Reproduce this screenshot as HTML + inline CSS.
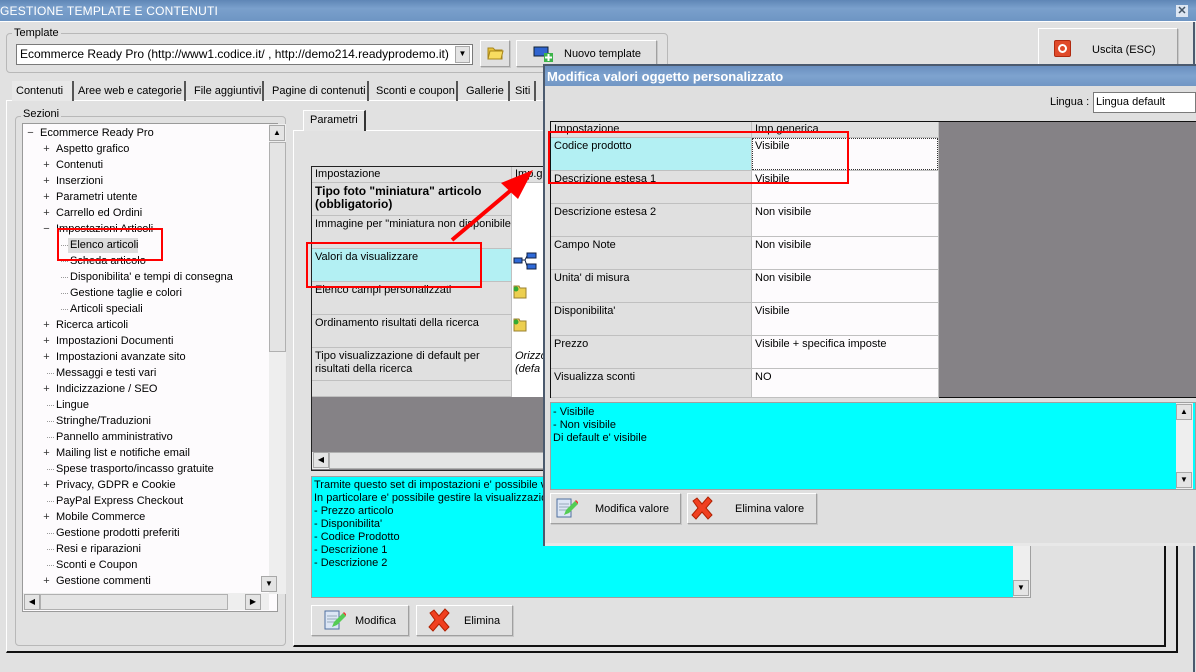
<!DOCTYPE html>
<html><head><meta charset="utf-8"><style>
*{margin:0;padding:0;box-sizing:border-box}
body{width:1196px;height:672px;overflow:hidden;background:#e1e1e1;font:11px "Liberation Sans",sans-serif;color:#000;position:relative}
.a{position:absolute}
.t{position:absolute;white-space:nowrap;line-height:13px}
.btn{position:absolute;background:#e0e0e0;border:1px solid #fff;border-right-color:#a0a0a0;border-bottom-color:#a0a0a0;box-shadow:1px 1px 0 #c8c8c8}
.grp{position:absolute;border:1px solid #b8b8b8;border-radius:4px}
.lbl{position:absolute;background:#e1e1e1;padding:0 2px;line-height:12px}
.tab{position:absolute;top:81px;height:20px;border-right:2px solid #555;line-height:20px;padding-left:4px;white-space:nowrap}
.cell{position:absolute;border-right:1px solid #c0c0c0;border-bottom:1px solid #c0c0c0;padding:2px 3px;line-height:13px}
.sb{position:absolute;background:#eeeeee}
.arr{position:absolute;width:16px;height:16px;background:#e4e4e4;border:1px solid #a8a8a8;font-size:8px;text-align:center;line-height:14px}
</style></head><body>
<div class="a" style="left:0;top:0;width:1196px;height:22px;background:linear-gradient(#5f86b6,#7aa0cc 40%,#6e95c3);border-bottom:1px solid #fff"></div>
<div class="t" style="left:0;top:5px;color:#fff;font-size:12px;letter-spacing:0.2px">GESTIONE TEMPLATE E CONTENUTI</div>
<div class="a" style="left:1176px;top:5px;width:12px;height:12px;background:#dde6f2;color:#456;font-size:11px;font-weight:bold;line-height:12px;text-align:center">✕</div>
<div class="a" style="left:1193px;top:22px;width:2px;height:650px;background:#4b5a6e"></div>

<div class="grp" style="left:6px;top:33px;width:662px;height:40px"></div>
<div class="lbl" style="left:12px;top:27px">Template</div>
<div class="a" style="left:16px;top:44px;width:457px;height:21px;background:#fff;border:1px solid #7a7a7a"></div>
<div class="t" style="left:20px;top:48px;font-size:12px">Ecommerce Ready Pro (http://www1.codice.it/ , http://demo214.readyprodemo.it)</div>
<div class="arr" style="left:455px;top:46px;width:15px;height:17px">▼</div>
<div class="btn" style="left:480px;top:40px;width:30px;height:27px"></div>
<svg class="a" style="left:486px;top:43px" width="18" height="18"><path d="M2 5h5l2 2h7v9H2z" fill="#e8c23a" stroke="#a8861a"/><path d="M4 8h13l-2 8H2z" fill="#f8dc60" stroke="#a8861a"/></svg>
<div class="btn" style="left:516px;top:40px;width:141px;height:27px"></div>
<svg class="a" style="left:533px;top:44px" width="22" height="18"><rect x="1" y="3" width="14" height="9" fill="#2f64d0" stroke="#123"/><rect x="11" y="9" width="9" height="9" fill="#3cb34a"/><path d="M15.5 10v7M12 13.5h7" stroke="#fff" stroke-width="2"/></svg>
<div class="t" style="left:564px;top:48px">Nuovo template</div>

<div class="btn" style="left:1038px;top:28px;width:140px;height:40px"></div>
<div class="a" style="left:1054px;top:40px;width:17px;height:17px;background:#e04a2a;border:1px solid #b02a10;border-radius:2px"></div>
<div class="a" style="left:1058px;top:44px;width:9px;height:9px;border:2px solid #fff;border-radius:50%"></div>
<div class="t" style="left:1092px;top:44px">Uscita (ESC)</div>

<div class="a" style="left:6px;top:100px;width:1172px;height:553px;border-right:2px solid #111;border-bottom:2px solid #111;border-left:1px solid #fff;border-top:1px solid #fff"></div>
<div class="tab" style="left:12px;width:62px;background:#e8e8e8">Contenuti</div>
<div class="tab" style="left:74px;width:112px">Aree web e categorie</div>
<div class="tab" style="left:190px;width:74px">File aggiuntivi</div>
<div class="tab" style="left:268px;width:101px">Pagine di contenuti</div>
<div class="tab" style="left:372px;width:86px">Sconti e coupon</div>
<div class="tab" style="left:462px;width:48px">Gallerie</div>
<div class="tab" style="left:511px;width:25px">Siti</div>

<div class="grp" style="left:15px;top:116px;width:271px;height:530px"></div>
<div class="lbl" style="left:21px;top:108px">Sezioni</div>
<div class="a" style="left:22px;top:123px;width:256px;height:489px;background:#fdfbfd;border:1px solid #9a9a9a"></div>
<div class="sb" style="left:269px;top:124px;width:17px;height:470px"></div>
<div class="arr" style="left:269px;top:125px">▲</div>
<div class="a" style="left:269px;top:142px;width:17px;height:210px;background:#e4e4e4;border:1px solid #b0b0b0"></div>
<div class="arr" style="left:261px;top:576px">▼</div>
<div class="sb" style="left:23px;top:593px;width:246px;height:17px"></div>
<div class="arr" style="left:24px;top:594px">◀</div>
<div class="a" style="left:40px;top:594px;width:188px;height:16px;background:#e4e4e4;border:1px solid #b0b0b0"></div>
<div class="arr" style="left:245px;top:594px">▶</div>
<div id="tree"></div>

<div class="a" style="left:293px;top:130px;width:873px;height:517px;border-left:1px solid #fff;border-top:1px solid #fff;border-right:2px solid #111;border-bottom:2px solid #111"></div>
<div class="a" style="left:303px;top:110px;width:63px;height:21px;border-top:1px solid #fff;border-left:1px solid #fff;border-right:2px solid #333;background:#e4e4e4"></div>
<div class="t" style="left:310px;top:114px">Parametri</div>
<div class="a" style="left:311px;top:166px;width:234px;height:305px;border:1px solid #222;background:#858286"></div>
<div class="a" style="left:312px;top:167px;width:233px;height:230px;background:#fff"></div>
<div class="cell" style="left:312px;top:167px;width:200px;height:16px;background:#e0e0e0;padding-top:1px">Impostazione</div>
<div class="cell" style="left:512px;top:167px;width:33px;height:16px;background:#e0e0e0;padding-top:1px">Imp.g</div>
<div class="cell" style="left:312px;top:183px;width:200px;height:33px;background:#e0e0e0;font-weight:bold;font-size:12px;line-height:13px">Tipo foto "miniatura" articolo (obbligatorio)</div>
<div class="cell" style="left:312px;top:216px;width:200px;height:33px;background:#e0e0e0;white-space:nowrap;overflow:hidden">Immagine per "miniatura non disponibile"</div>
<div class="cell" style="left:312px;top:249px;width:200px;height:33px;background:#b3f0f3">Valori da visualizzare</div>
<div class="cell" style="left:312px;top:282px;width:200px;height:33px;background:#e0e0e0">Elenco campi personalizzati</div>
<div class="cell" style="left:312px;top:315px;width:200px;height:33px;background:#e0e0e0">Ordinamento risultati della ricerca</div>
<div class="cell" style="left:312px;top:348px;width:200px;height:33px;background:#e0e0e0">Tipo visualizzazione di default per risultati della ricerca</div>
<div class="cell" style="left:312px;top:381px;width:200px;height:16px;background:#e0e0e0"></div>
<div class="t" style="left:515px;top:350px;font-style:italic">Orizzo<br>(defa</div>
<svg class="a" style="left:513px;top:252px" width="24" height="20"><rect x="1" y="6" width="8" height="5" fill="#2f6ad8" stroke="#124"/><rect x="14" y="1" width="9" height="5" fill="#2f6ad8" stroke="#124"/><rect x="14" y="12" width="9" height="5" fill="#2f6ad8" stroke="#124"/><path d="M9 8h3l2-4M12 8l2 6" stroke="#124" fill="none"/></svg>
<svg class="a" style="left:512px;top:283px" width="16" height="16"><path d="M2 3h5l1 2h6v10H2z" fill="#eccf50" stroke="#9a8030"/><circle cx="4" cy="6" r="2.5" fill="#3a3"/></svg>
<svg class="a" style="left:512px;top:316px" width="16" height="16"><path d="M2 3h5l1 2h6v10H2z" fill="#eccf50" stroke="#9a8030"/><circle cx="4" cy="6" r="2.5" fill="#3a3"/></svg>
<div class="sb" style="left:312px;top:452px;width:233px;height:17px"></div>
<div class="arr" style="left:313px;top:452px">◀</div>
<div class="a" style="left:329px;top:452px;width:216px;height:17px;background:#e4e4e4;border:1px solid #b0b0b0"></div>
<div class="a" style="left:311px;top:476px;width:720px;height:122px;background:#00ffff;border:1px solid #a0a0a0"></div>
<div class="t" style="left:314px;top:479px">Tramite questo set di impostazioni e' possibile vis<br>In particolare e' possibile gestire la visualizzazion<br>- Prezzo articolo<br>- Disponibilita'<br>- Codice Prodotto<br>- Descrizione 1<br>- Descrizione 2</div>
<div class="sb" style="left:1013px;top:477px;width:17px;height:120px"></div>
<div class="arr" style="left:1013px;top:580px">▼</div>
<div class="btn" style="left:311px;top:605px;width:98px;height:31px"></div>
<svg class="a" style="left:324px;top:608px" width="22" height="24"><rect x="1" y="3" width="14" height="18" fill="#dce6f5" stroke="#5070a0"/><path d="M3 8h10M3 11h10M3 14h8" stroke="#9ab"/><path d="M8 19l2-5 9-9 3 3-9 9z" fill="#5c5"/><path d="M19 5l3 3 1-1-3-3z" fill="#e33"/></svg>
<div class="t" style="left:355px;top:615px">Modifica</div>
<div class="btn" style="left:416px;top:605px;width:97px;height:31px"></div>
<svg class="a" style="left:427px;top:608px" width="24" height="24"><path d="M3 5l4-3 5 6 6-7 4 4-6 7 6 7-4 4-6-7-6 7-4-4 6-7z" fill="#f04020" stroke="#b02000"/></svg>
<div class="t" style="left:464px;top:615px">Elimina</div>

<div class="a" style="left:543px;top:64px;width:653px;height:482px;background:#dfdfdf;border:2px solid #4b5a6e;border-right:none"></div>
<div class="a" style="left:545px;top:66px;width:651px;height:20px;background:linear-gradient(#6a8fbf,#7ea3cf 50%,#7196c4)"></div>
<div class="t" style="left:547px;top:70px;color:#fff;font-size:13px;font-weight:bold">Modifica valori oggetto personalizzato</div>
<div class="t" style="left:1050px;top:96px">Lingua :</div>
<div class="a" style="left:1093px;top:92px;width:103px;height:21px;background:#fff;border:1px solid #7a7a7a"></div>
<div class="t" style="left:1096px;top:96px">Lingua default</div>
<div class="a" style="left:550px;top:121px;width:646px;height:277px;background:#858286;border:1px solid #111;border-right:none"></div>
<div class="a" style="left:551px;top:122px;width:388px;height:275px;background:#fdfbfd"></div>
<div class="cell" style="left:551px;top:122px;width:201px;height:16px;background:#e0e0e0;padding-top:1px">Impostazione</div>
<div class="cell" style="left:752px;top:122px;width:187px;height:16px;background:#e0e0e0;padding-top:1px">Imp.generica</div>
<div id="dg"></div>
<div class="a" style="left:752px;top:138px;width:186px;height:32px;border:1px dotted #333"></div>
<div class="a" style="left:550px;top:402px;width:646px;height:88px;background:#00ffff;border:1px solid #a0a0a0"></div>
<div class="t" style="left:553px;top:406px">- Visibile<br>- Non visibile<br>Di default e' visibile</div>
<div class="sb" style="left:1176px;top:403px;width:17px;height:86px"></div>
<div class="arr" style="left:1176px;top:404px">▲</div>
<div class="arr" style="left:1176px;top:472px">▼</div>
<div class="btn" style="left:550px;top:493px;width:131px;height:31px"></div>
<svg class="a" style="left:556px;top:496px" width="22" height="24"><rect x="1" y="3" width="14" height="18" fill="#dce6f5" stroke="#5070a0"/><path d="M3 8h10M3 11h10M3 14h8" stroke="#9ab"/><path d="M8 19l2-5 9-9 3 3-9 9z" fill="#5c5"/><path d="M19 5l3 3 1-1-3-3z" fill="#e33"/></svg>
<div class="t" style="left:595px;top:503px">Modifica valore</div>
<div class="btn" style="left:687px;top:493px;width:130px;height:31px"></div>
<svg class="a" style="left:690px;top:496px" width="24" height="24"><path d="M3 5l4-3 5 6 6-7 4 4-6 7 6 7-4 4-6-7-6 7-4-4 6-7z" fill="#f04020" stroke="#b02000"/></svg>
<div class="t" style="left:735px;top:503px">Elimina valore</div>
<div class="a" style="left:545px;top:543px;width:651px;height:3px;background:#e8e8e8"></div>

<div class="a" style="left:57px;top:228px;width:106px;height:33px;border:2px solid #f00"></div>
<div class="a" style="left:306px;top:242px;width:176px;height:46px;border:2px solid #f00"></div>
<div class="a" style="left:548px;top:131px;width:301px;height:53px;border:2px solid #f00"></div>
<svg class="a" style="left:0;top:0" width="1196" height="672"><path d="M452 240L510 191" stroke="#f00" stroke-width="4"/><path d="M533 170L501 183L518 199z" fill="#f00"/></svg>

<script>
var items=[["Ecommerce Ready Pro",0,"-"],["Aspetto grafico",1,"+"],["Contenuti",1,"+"],["Inserzioni",1,"+"],["Parametri utente",1,"+"],["Carrello ed Ordini",1,"+"],["Impostazioni Articoli",1,"-"],["Elenco articoli",2,""],["Scheda articolo",2,""],["Disponibilita' e tempi di consegna",2,""],["Gestione taglie e colori",2,""],["Articoli speciali",2,""],["Ricerca articoli",1,"+"],["Impostazioni Documenti",1,"+"],["Impostazioni avanzate sito",1,"+"],["Messaggi e testi vari",1,""],["Indicizzazione / SEO",1,"+"],["Lingue",1,""],["Stringhe/Traduzioni",1,""],["Pannello amministrativo",1,""],["Mailing list e notifiche email",1,"+"],["Spese trasporto/incasso gratuite",1,""],["Privacy, GDPR e Cookie",1,"+"],["PayPal Express Checkout",1,""],["Mobile Commerce",1,"+"],["Gestione prodotti preferiti",1,""],["Resi e riparazioni",1,""],["Sconti e Coupon",1,""],["Gestione commenti",1,"+"]];
var h="";items.forEach(function(it,i){var y=127+i*16;var x=[40,56,70][it[1]];
if(i==7)h+='<div class="a" style="left:68px;top:'+(y-1)+'px;width:70px;height:15px;background:#dcdcdc"></div>';
if(it[2])h+='<div class="a" style="left:'+(x-14)+'px;top:'+(y+2)+'px;width:9px;height:9px;font-size:11px;line-height:8px;text-align:center;color:#333">'+(it[2]=="+"?"+":"−")+'</div>';
else h+='<div class="a" style="left:'+(x-9)+'px;top:'+(y+6)+'px;width:7px;border-top:1px dotted #999"></div>';
h+='<div class="t" style="left:'+x+'px;top:'+y+'px">'+it[0]+'</div>';});
document.getElementById("tree").innerHTML=h;
var r=[["Codice prodotto","Visibile"],["Descrizione estesa 1","Visibile"],["Descrizione estesa 2","Non visibile"],["Campo Note","Non visibile"],["Unita' di misura","Non visibile"],["Disponibilita'","Visibile"],["Prezzo","Visibile + specifica imposte"],["Visualizza sconti","NO"]];
var g="";r.forEach(function(c,i){var y=138+i*33;var hh=i==7?29:33;
g+='<div class="cell" style="left:551px;top:'+y+'px;width:201px;height:'+hh+'px;background:'+(i==0?'#b3f0f3':'#e0e0e0')+'">'+c[0]+'</div>';
g+='<div class="cell" style="left:752px;top:'+y+'px;width:187px;height:'+hh+'px;background:#fdfbfd">'+c[1]+'</div>';});
document.getElementById("dg").innerHTML=g;
</script>
</body></html>
